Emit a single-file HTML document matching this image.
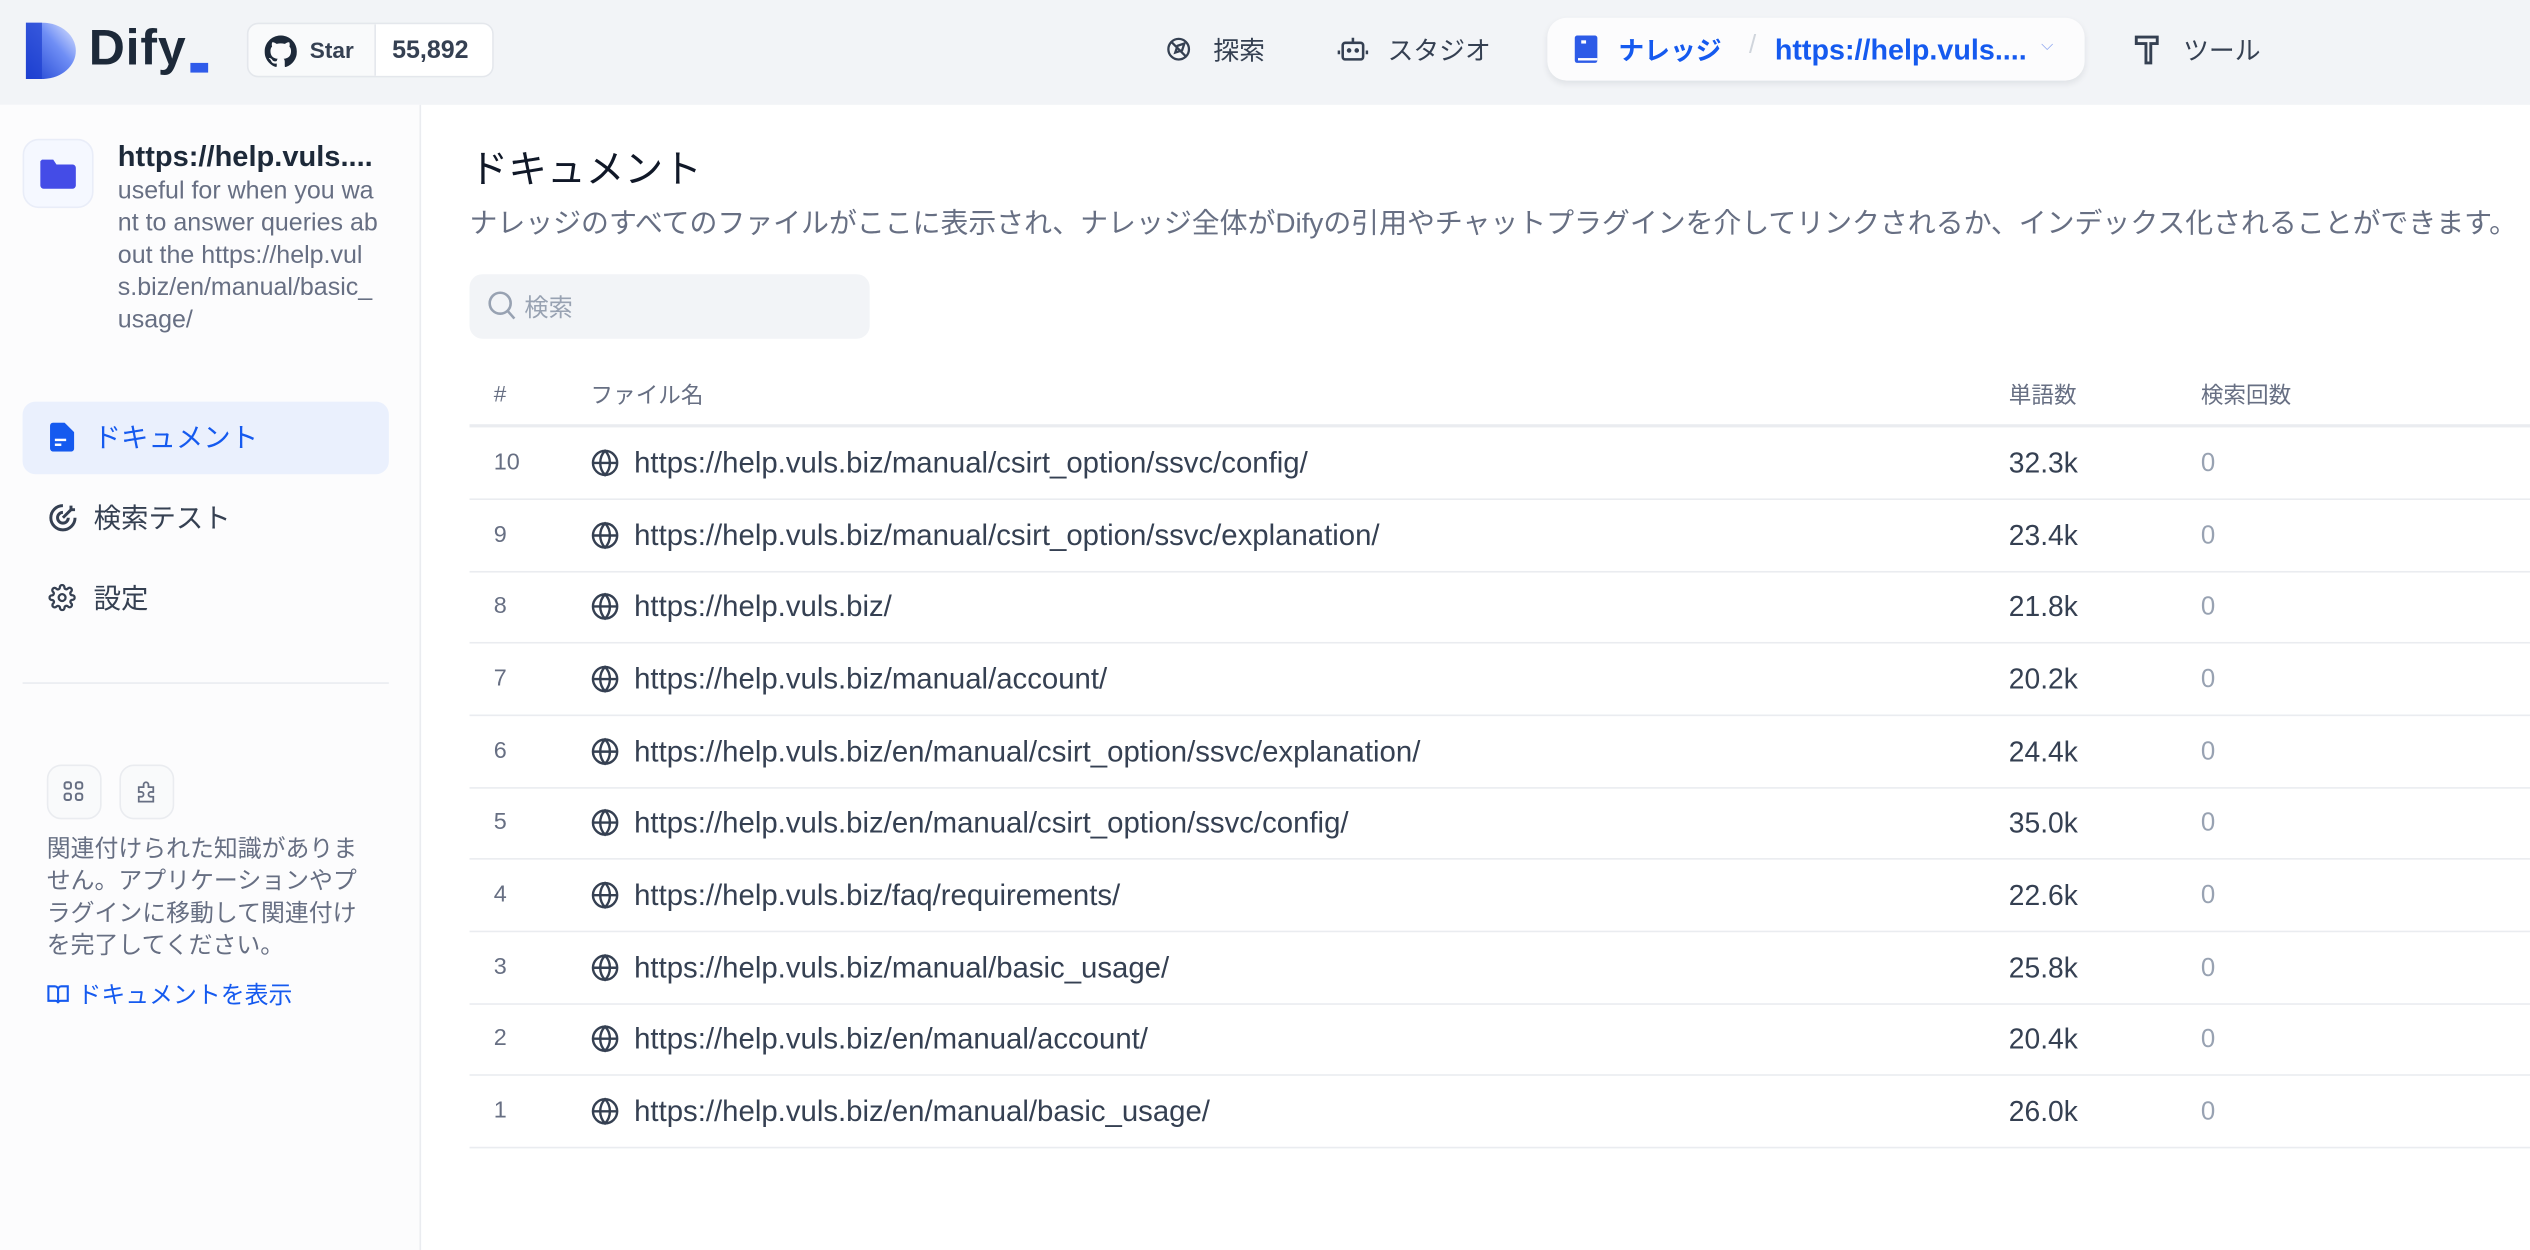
<!DOCTYPE html>
<html><head><meta charset="utf-8"><style>
*{box-sizing:border-box;margin:0;padding:0}
html,body{width:2530px;height:1250px;overflow:hidden;background:#fff}
#w{width:1568px;height:775px;transform:scale(1.6135,1.6129);transform-origin:0 0;position:relative;font-family:"Liberation Sans","Noto Sans CJK JP",sans-serif;color:#354052}
.a{position:absolute;white-space:nowrap}
.hdr{position:absolute;left:0;top:0;width:1568px;height:65px;background:#f2f4f7}
.side{position:absolute;left:0;top:65px;width:261px;height:710px;background:#fcfcfd;border-right:1px solid #eaecf0}
.row{position:absolute;left:291px;width:1277px;height:45px;border-bottom:1px solid #eaecf0;font-size:17.5px}
.row .n{position:absolute;left:15px;top:14px;color:#676f83;font-size:14.5px}
.row .g{position:absolute;left:75px;top:13px}
.row .u{position:absolute;left:102px;top:12px;color:#354052;font-size:18.2px}
.row .c{position:absolute;left:954px;top:12px;color:#354052}
.row .z{position:absolute;left:1073px;top:14px;color:#98a2b2;font-size:16px}
</style></head><body><div id="w">
<div class="hdr"></div>
<svg class="a" style="left:16px;top:14px" width="32" height="35" viewBox="0 0 32 35"><defs><linearGradient id="lg" x1="0" y1="1" x2="1" y2="0"><stop offset="0" stop-color="#1a3fd0"/><stop offset="0.6" stop-color="#6f8ef5"/><stop offset="1" stop-color="#e8edff"/></linearGradient></defs><path d="M0 0H10C22 0 31 8 31 17.5S22 35 10 35H0Z" fill="url(#lg)"/><rect x="0" y="0" width="10" height="35" fill="#1c3fd0" opacity=".7"/></svg>
<div class="a" style="left:55px;top:12px;font-size:31px;font-weight:bold;color:#1d2939;letter-spacing:0.5px">Dify</div>
<div class="a" style="left:118px;top:39px;width:11px;height:6px;background:#2f5bea"></div>
<div class="a" style="left:153px;top:14px;width:153px;height:34px;border:1px solid #e4e7ec;border-radius:7px;background:#f9fafb;overflow:hidden">
 <svg class="a" style="left:10px;top:7px" width="20" height="20" viewBox="0 0 16 16"><path fill="#1d2939" d="M8 0C3.58 0 0 3.58 0 8c0 3.54 2.29 6.53 5.47 7.59.4.07.55-.17.55-.38v-1.33c-2.23.48-2.7-1.07-2.7-1.07-.36-.92-.89-1.17-.89-1.17-.73-.5.05-.49.05-.49.8.06 1.23.83 1.23.83.71 1.22 1.87.87 2.33.66.07-.52.28-.87.5-1.07-1.78-.2-3.64-.89-3.64-3.95 0-.87.31-1.59.82-2.15-.08-.2-.36-1.02.08-2.12 0 0 .67-.21 2.2.82a7.6 7.6 0 0 1 4 0c1.53-1.04 2.2-.82 2.2-.82.44 1.1.16 1.92.08 2.12.51.56.82 1.27.82 2.15 0 3.07-1.87 3.75-3.65 3.95.29.25.54.73.54 1.48v2.2c0 .21.15.46.55.38A8.01 8.01 0 0 0 16 8c0-4.42-3.58-8-8-8z"/></svg>
 <div class="a" style="left:38px;top:8px;font-size:14px;font-weight:bold;color:#354052">Star</div>
 <div class="a" style="left:78px;top:0;width:75px;height:34px;background:#fff;border-left:1px solid #e4e7ec"></div>
 <div class="a" style="left:89px;top:8px;font-size:15.5px;font-weight:bold;color:#354052">55,892</div>
</div>
<svg class="a" style="left:722px;top:22px" width="17" height="17" viewBox="0 0 24 24" fill="none" stroke="#354052" stroke-width="2"><circle cx="12" cy="12" r="9"/><path d="M5 5l14 14M9 15l2-6 6-2-2 6z"/></svg>
<div class="a" style="left:752px;top:18px;font-size:16px">探索</div>
<svg class="a" style="left:829px;top:21px" width="19" height="19" viewBox="0 0 24 24" fill="none" stroke="#354052" stroke-width="2"><rect x="4" y="7" width="16" height="13" rx="2"/><path d="M12 7V3M1 13v3M23 13v3"/><circle cx="9" cy="13" r=".8" fill="#354052"/><circle cx="15" cy="13" r=".8" fill="#354052"/></svg>
<div class="a" style="left:860px;top:18px;font-size:16px">スタジオ</div>
<div class="a" style="left:959px;top:11px;width:333px;height:39px;background:#fcfcfd;border-radius:12px;box-shadow:0 2px 4px rgba(16,24,40,.08)"></div>
<svg class="a" style="left:975px;top:22px" width="16" height="18" viewBox="0 0 16 18"><rect x="1" y="0" width="14" height="17" rx="1.5" fill="#2d5be7"/><rect x="3" y="14" width="12" height="1.5" fill="#fff"/><rect x="5" y="3" width="3" height="2" fill="#fff"/></svg>
<div class="a" style="left:1003px;top:18px;font-size:16px;font-weight:bold;color:#155aef">ナレッジ</div>
<div class="a" style="left:1084px;top:20px;font-size:16px;color:#d0d5dc">/</div>
<div class="a" style="left:1100px;top:21px;font-size:17.8px;font-weight:bold;color:#155aef">https://help.vuls....</div>
<div class="a" style="left:1265px;top:23px;font-size:10px;color:#8aa4f0">⌵</div>
<svg class="a" style="left:1322px;top:21px" width="18" height="20" viewBox="0 0 18 20" fill="none" stroke="#354052" stroke-width="1.8"><path d="M2 2h13v4H11v12H8V6H2z"/></svg>
<div class="a" style="left:1353px;top:18px;font-size:16px">ツール</div>

<div class="side"></div>
<div class="a" style="left:14px;top:86px;width:44px;height:43px;border:1px solid #e9edf8;border-radius:10px;background:#f5f8ff"></div>
<svg class="a" style="left:24px;top:97px" width="24" height="22" viewBox="0 0 24 22"><path d="M2 2h7l2 3h10a2 2 0 0 1 2 2v11a2 2 0 0 1-2 2H3a2 2 0 0 1-2-2V3z" fill="#444ce7"/></svg>
<div class="a" style="left:73px;top:87px;font-size:18px;font-weight:bold;color:#1d2939">https://help.vuls....</div>
<div class="a" style="left:73px;top:109px;font-size:15.5px;line-height:20px;color:#676f83;white-space:normal;width:190px">useful for when you wa<br>nt to answer queries ab<br>out the https://help.vul<br>s.biz/en/manual/basic_<br>usage/</div>
<div class="a" style="left:14px;top:249px;width:227px;height:45px;background:#eaf0fd;border-radius:8px"></div>
<svg class="a" style="left:31px;top:262px" width="15" height="18" viewBox="0 0 15 18"><path d="M0 2a2 2 0 0 1 2-2h7l6 6v10a2 2 0 0 1-2 2H2a2 2 0 0 1-2-2z" fill="#155aef"/><rect x="3" y="10" width="7" height="1.5" fill="#fff"/><rect x="3" y="13" width="4" height="1.5" fill="#fff"/></svg>
<div class="a" style="left:58px;top:257px;font-size:17px;color:#155aef">ドキュメント</div>
<svg class="a" style="left:29px;top:311px" width="20" height="20" viewBox="0 0 24 24" fill="none" stroke="#354052" stroke-width="2.2"><path d="M21 12a9 9 0 1 1-9-9"/><path d="M16 12a4 4 0 1 1-4-4"/><path d="M12 12l6-6M18 3v3h3"/></svg>
<div class="a" style="left:58px;top:307px;font-size:17px">検索テスト</div>
<svg class="a" style="left:30px;top:362px" width="17" height="17" viewBox="0 0 24 24" fill="none" stroke="#354052" stroke-width="2"><circle cx="12" cy="12" r="3"/><path d="M19.4 15a1.7 1.7 0 0 0 .3 1.8l.1.1a2 2 0 1 1-2.8 2.8l-.1-.1a1.7 1.7 0 0 0-1.8-.3 1.7 1.7 0 0 0-1 1.5V21a2 2 0 1 1-4 0v-.1a1.7 1.7 0 0 0-1.1-1.5 1.7 1.7 0 0 0-1.8.3l-.1.1a2 2 0 1 1-2.8-2.8l.1-.1a1.7 1.7 0 0 0 .3-1.8 1.7 1.7 0 0 0-1.5-1H3a2 2 0 1 1 0-4h.1a1.7 1.7 0 0 0 1.5-1.1 1.7 1.7 0 0 0-.3-1.8l-.1-.1a2 2 0 1 1 2.8-2.8l.1.1a1.7 1.7 0 0 0 1.8.3H9a1.7 1.7 0 0 0 1-1.5V3a2 2 0 1 1 4 0v.1a1.7 1.7 0 0 0 1 1.5 1.7 1.7 0 0 0 1.8-.3l.1-.1a2 2 0 1 1 2.8 2.8l-.1.1a1.7 1.7 0 0 0-.3 1.8V9a1.7 1.7 0 0 0 1.5 1H21a2 2 0 1 1 0 4h-.1a1.7 1.7 0 0 0-1.5 1z"/></svg>
<div class="a" style="left:58px;top:357px;font-size:17px">設定</div>
<div class="a" style="left:14px;top:423px;width:227px;height:1px;background:#eaecf0"></div>
<div class="a" style="left:29px;top:474px;width:34px;height:34px;border:1px solid #eaecf0;border-radius:9px;background:#f9fafb"></div>
<svg class="a" style="left:39px;top:484px" width="13" height="13" viewBox="0 0 13 13" fill="none" stroke="#676f83" stroke-width="1.2"><rect x="1" y="1" width="4" height="4" rx="1.3"/><rect x="8" y="1" width="4" height="4" rx="1.3"/><rect x="1" y="8" width="4" height="4" rx="1.3"/><rect x="8" y="8" width="4" height="4" rx="1.3"/></svg>
<div class="a" style="left:74px;top:474px;width:34px;height:34px;border:1px solid #eaecf0;border-radius:9px;background:#f9fafb"></div>
<svg class="a" style="left:84px;top:484px" width="14" height="14" viewBox="0 0 14 14" fill="none" stroke="#676f83" stroke-width="1.1"><path d="M2 4h3V2.5a1.5 1.5 0 0 1 3 0V4h3v3h-1.5a1.5 1.5 0 0 0 0 3H11v3H2v-3h1.5a1.5 1.5 0 0 0 0-3H2z"/></svg>
<div class="a" style="left:29px;top:517px;font-size:14.8px;line-height:20px;color:#676f83">関連付けられた知識がありま<br>せん。アプリケーションやプ<br>ラグインに移動して関連付け<br>を完了してください。</div>
<svg class="a" style="left:29px;top:610px" width="14" height="13" viewBox="0 0 14 13" fill="none" stroke="#155aef" stroke-width="1.3"><path d="M1 1.5h4a2 2 0 0 1 2 2V12a1.5 1.5 0 0 0-1.5-1.5H1zM13 1.5H9a2 2 0 0 0-2 2V12a1.5 1.5 0 0 1 1.5-1.5H13z"/></svg>
<div class="a" style="left:48px;top:606px;font-size:14.8px;color:#155aef">ドキュメントを表示</div>

<div class="a" style="left:291px;top:85px;font-size:24px;color:#101828">ドキュメント</div>
<div class="a" style="left:291px;top:124px;font-size:17.3px;color:#676f83">ナレッジのすべてのファイルがここに表示され、ナレッジ全体がDifyの引用やチャットプラグインを介してリンクされるか、インデックス化されることができます。</div>
<div class="a" style="left:291px;top:170px;width:248px;height:40px;background:#f2f4f7;border-radius:8px"></div>
<svg class="a" style="left:302px;top:180px" width="18" height="19" viewBox="0 0 18 19" fill="none" stroke="#98a2b2" stroke-width="1.6"><circle cx="8" cy="8" r="6.5"/><path d="M12.8 13l4 4.5"/></svg>
<div class="a" style="left:325px;top:180px;font-size:15px;color:#98a2b2">検索</div>
<div class="a" style="left:291px;top:226px;width:1277px;height:39px;border-bottom:2px solid #eaecf0"></div>
<div class="a" style="left:306px;top:236px;font-size:14px;color:#676f83">#</div>
<div class="a" style="left:366px;top:235px;font-size:14px;color:#676f83">ファイル名</div>
<div class="a" style="left:1245px;top:235px;font-size:14px;color:#676f83">単語数</div>
<div class="a" style="left:1364px;top:235px;font-size:14px;color:#676f83">検索回数</div>

<div class="row" style="top:265px"><span class="n">10</span><svg class="g" width="18" height="18" viewBox="0 0 24 24" fill="none" stroke="#354052" stroke-width="2"><circle cx="12" cy="12" r="10"/><path d="M2 12h20M12 2c3 3 4 6.5 4 10s-1 7-4 10c-3-3-4-6.5-4-10s1-7 4-10z"/></svg><span class="u">https://help.vuls.biz/manual/csirt_option/ssvc/config/</span><span class="c">32.3k</span><span class="z">0</span></div>
<div class="row" style="top:310px"><span class="n">9</span><svg class="g" width="18" height="18" viewBox="0 0 24 24" fill="none" stroke="#354052" stroke-width="2"><circle cx="12" cy="12" r="10"/><path d="M2 12h20M12 2c3 3 4 6.5 4 10s-1 7-4 10c-3-3-4-6.5-4-10s1-7 4-10z"/></svg><span class="u">https://help.vuls.biz/manual/csirt_option/ssvc/explanation/</span><span class="c">23.4k</span><span class="z">0</span></div>
<div class="row" style="top:354px"><span class="n">8</span><svg class="g" width="18" height="18" viewBox="0 0 24 24" fill="none" stroke="#354052" stroke-width="2"><circle cx="12" cy="12" r="10"/><path d="M2 12h20M12 2c3 3 4 6.5 4 10s-1 7-4 10c-3-3-4-6.5-4-10s1-7 4-10z"/></svg><span class="u">https://help.vuls.biz/</span><span class="c">21.8k</span><span class="z">0</span></div>
<div class="row" style="top:399px"><span class="n">7</span><svg class="g" width="18" height="18" viewBox="0 0 24 24" fill="none" stroke="#354052" stroke-width="2"><circle cx="12" cy="12" r="10"/><path d="M2 12h20M12 2c3 3 4 6.5 4 10s-1 7-4 10c-3-3-4-6.5-4-10s1-7 4-10z"/></svg><span class="u">https://help.vuls.biz/manual/account/</span><span class="c">20.2k</span><span class="z">0</span></div>
<div class="row" style="top:444px"><span class="n">6</span><svg class="g" width="18" height="18" viewBox="0 0 24 24" fill="none" stroke="#354052" stroke-width="2"><circle cx="12" cy="12" r="10"/><path d="M2 12h20M12 2c3 3 4 6.5 4 10s-1 7-4 10c-3-3-4-6.5-4-10s1-7 4-10z"/></svg><span class="u">https://help.vuls.biz/en/manual/csirt_option/ssvc/explanation/</span><span class="c">24.4k</span><span class="z">0</span></div>
<div class="row" style="top:488px"><span class="n">5</span><svg class="g" width="18" height="18" viewBox="0 0 24 24" fill="none" stroke="#354052" stroke-width="2"><circle cx="12" cy="12" r="10"/><path d="M2 12h20M12 2c3 3 4 6.5 4 10s-1 7-4 10c-3-3-4-6.5-4-10s1-7 4-10z"/></svg><span class="u">https://help.vuls.biz/en/manual/csirt_option/ssvc/config/</span><span class="c">35.0k</span><span class="z">0</span></div>
<div class="row" style="top:533px"><span class="n">4</span><svg class="g" width="18" height="18" viewBox="0 0 24 24" fill="none" stroke="#354052" stroke-width="2"><circle cx="12" cy="12" r="10"/><path d="M2 12h20M12 2c3 3 4 6.5 4 10s-1 7-4 10c-3-3-4-6.5-4-10s1-7 4-10z"/></svg><span class="u">https://help.vuls.biz/faq/requirements/</span><span class="c">22.6k</span><span class="z">0</span></div>
<div class="row" style="top:578px"><span class="n">3</span><svg class="g" width="18" height="18" viewBox="0 0 24 24" fill="none" stroke="#354052" stroke-width="2"><circle cx="12" cy="12" r="10"/><path d="M2 12h20M12 2c3 3 4 6.5 4 10s-1 7-4 10c-3-3-4-6.5-4-10s1-7 4-10z"/></svg><span class="u">https://help.vuls.biz/manual/basic_usage/</span><span class="c">25.8k</span><span class="z">0</span></div>
<div class="row" style="top:622px"><span class="n">2</span><svg class="g" width="18" height="18" viewBox="0 0 24 24" fill="none" stroke="#354052" stroke-width="2"><circle cx="12" cy="12" r="10"/><path d="M2 12h20M12 2c3 3 4 6.5 4 10s-1 7-4 10c-3-3-4-6.5-4-10s1-7 4-10z"/></svg><span class="u">https://help.vuls.biz/en/manual/account/</span><span class="c">20.4k</span><span class="z">0</span></div>
<div class="row" style="top:667px"><span class="n">1</span><svg class="g" width="18" height="18" viewBox="0 0 24 24" fill="none" stroke="#354052" stroke-width="2"><circle cx="12" cy="12" r="10"/><path d="M2 12h20M12 2c3 3 4 6.5 4 10s-1 7-4 10c-3-3-4-6.5-4-10s1-7 4-10z"/></svg><span class="u">https://help.vuls.biz/en/manual/basic_usage/</span><span class="c">26.0k</span><span class="z">0</span></div>
</div></body></html>
